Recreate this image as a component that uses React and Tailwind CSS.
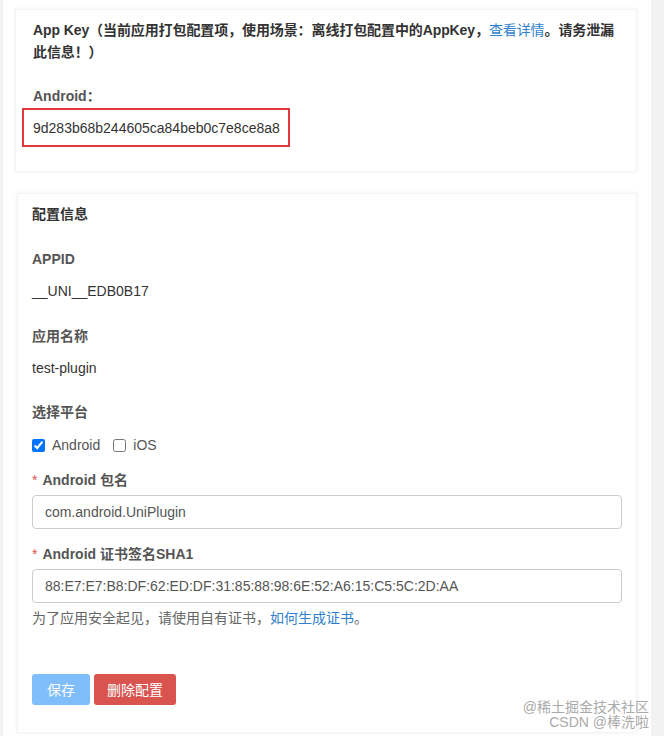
import React from "react";

const font = { fontFamily: '"Liberation Sans", Arial, "Noto Sans CJK SC", sans-serif' };

function Field({ label, value }) {
  return (
    <div>
      <div className="mt-[25px] font-bold text-[#555] leading-5">{label}</div>
      <div className="mt-3 text-[#333] leading-5">{value}</div>
    </div>
  );
}

function InputRow({ label, value }) {
  return (
    <div className="mt-[15px]">
      <div className="leading-5 font-bold text-[#555]">
        <span className="text-[#d9534f] font-normal mr-[5px]">*</span>
        {label}
      </div>
      <div className="mt-[5px] h-[34px] border border-[#ccc] rounded-[4px] flex items-center px-3 text-[#555]">
        {value}
      </div>
    </div>
  );
}

export default function App() {
  return (
    <div style={font} className="min-h-[736px] bg-[#f2f2f2] text-sm">
      <div className="relative ml-[3px] w-[648px] min-h-[736px] bg-white pt-[9px] pl-[12px]">
        {/* app key card */}
        <div className="w-[622px] border border-[#f3f3f3] shadow-[0_0_4px_rgba(0,0,0,0.06)] pt-[9px] pb-[24px] pl-[6px] pr-[2px]">
          <p className="px-[11px] font-bold text-[#333] leading-[22px] tracking-[-0.1px]">
            App Key（当前应用打包配置项，使用场景：离线打包配置中的AppKey，<span className="text-[#2f7fcb] font-normal">查看详情</span>。请务泄漏此信息！）
          </p>
          <div className="mt-[23px] px-[11px] font-bold text-[#555] leading-5">Android：</div>
          <div className="mt-[2px] w-[268px] h-[39px] border-2 border-[#e0383e] flex items-center pl-[9px] text-[#333]">
            9d283b68b244605ca84beb0c7e8ce8a8
          </div>
        </div>

        {/* config card */}
        <div className="mt-[21px] ml-[2px] w-[620px] h-[540px] border border-[#f3f3f3] shadow-[0_0_4px_rgba(0,0,0,0.06)] pt-[10px] pl-[14px] pr-[14px]">
          <div className="font-bold text-[#333] leading-5">配置信息</div>
          <Field label="APPID" value="__UNI__EDB0B17" />
          <Field label="应用名称" value="test-plugin" />
          <div className="mt-6 font-bold text-[#555] leading-5">选择平台</div>
          <div className="mt-[13px] flex items-center leading-5 text-[#555]">
            <input type="checkbox" defaultChecked className="w-[13px] h-[13px] m-0 accent-[#0075ff]" />
            <span className="ml-[7px]">Android</span>
            <input type="checkbox" className="ml-[13px] w-[13px] h-[13px] m-0" />
            <span className="ml-[7px]">iOS</span>
          </div>
          <InputRow label="Android 包名" value="com.android.UniPlugin" />
          <InputRow label="Android 证书签名SHA1" value="88:E7:E7:B8:DF:62:ED:DF:31:85:88:98:6E:52:A6:15:C5:5C:2D:AA" />
          <div className="mt-[5px] leading-5 text-[#666]">
            为了应用安全起见，请使用自有证书，<span className="text-[#2f7fcb]">如何生成证书</span>。
          </div>
          <div className="mt-[46px] flex gap-[4px]">
            <button className="w-[58px] h-[31px] rounded-[3px] bg-[#80bdfb] text-white">保存</button>
            <button className="w-[82px] h-[31px] rounded-[3px] bg-[#d9534f] text-white">删除配置</button>
          </div>
        </div>

        {/* watermark */}
        <div className="absolute right-[2px] bottom-[6px] text-right text-[14px] leading-[15px] text-[#aaa]">
          <div>@稀土掘金技术社区</div>
          <div>CSDN @棒洗啦</div>
        </div>
      </div>
    </div>
  );
}
